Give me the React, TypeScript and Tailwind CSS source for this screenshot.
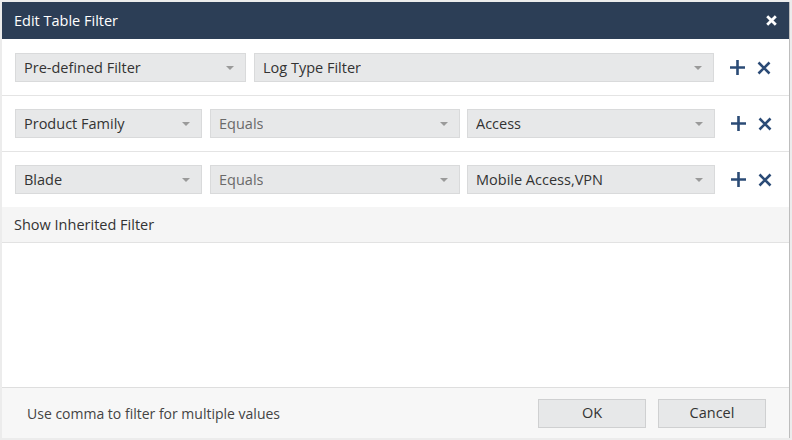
import React from "react";

const font = { fontFamily: '"Segoe UI", "Open Sans", "Noto Sans", sans-serif' };

function Caret() {
  return (
    <svg width="8" height="4" viewBox="0 0 8 4" className="shrink-0">
      <path d="M0 0 L8 0 L4 4 Z" fill="#9a9a9a" />
    </svg>
  );
}

function Select({ w, text, light }: { w: string; text: string; light?: boolean }) {
  return (
    <div
      className={`${w} h-[29px] shrink-0 flex items-center justify-between pl-[8px] pr-[11px] bg-[#e7e8e9] border border-[#d9dadb] text-[14.5px] ${light ? "text-[#6a6a6a]" : "text-[#333]"}`}
    >
      <span className="truncate">{text}</span>
      <Caret />
    </div>
  );
}

function Actions() {
  return (
    <div className="flex items-center gap-[11px] ml-[15px]">
      <svg width="17" height="17" viewBox="0 0 17 17">
        <path d="M8.5 1 V16 M1 8.5 H16" stroke="#2b4b76" strokeWidth="2.6" />
      </svg>
      <svg width="14" height="14" viewBox="0 0 14 14">
        <path d="M1.5 1.5 L12.5 12.5 M12.5 1.5 L1.5 12.5" stroke="#2b4b76" strokeWidth="2.6" />
      </svg>
    </div>
  );
}

export default function App() {
  return (
    <div className="w-[792px] h-[440px] bg-[#ececec] pl-[2px] pr-[2px] pt-[2px] pb-[2px] overflow-hidden" style={font}>
      <div className="w-[788px] h-[436px] bg-white border-r border-[#bdbdbd] flex flex-col">
        <div className="h-[37px] shrink-0 bg-[#2c3e56] flex items-center justify-between pl-[12px] pr-[12px]">
          <span className="text-white text-[14.5px]">Edit Table Filter</span>
          <svg width="11" height="11" viewBox="0 0 11 11">
            <path d="M1.2 1.2 L9.8 9.8 M9.8 1.2 L1.2 9.8" stroke="#ffffff" strokeWidth="2.8" />
          </svg>
        </div>
        <div className="flex items-center pl-[13px] pt-[14px] pb-[13px] border-b border-[#e4e4e4]">
          <Select w="w-[231px]" text="Pre-defined Filter" />
          <div className="w-[8px]" />
          <Select w="w-[460px]" text="Log Type Filter" />
          <Actions />
        </div>
        <div className="flex items-center pl-[13px] pt-[13px] pb-[13px] border-b border-[#e4e4e4]">
          <Select w="w-[187px]" text="Product Family" />
          <div className="w-[8px]" />
          <Select w="w-[250px]" text="Equals" light />
          <div className="w-[7px]" />
          <Select w="w-[248px]" text="Access" />
          <Actions />
        </div>
        <div className="flex items-center pl-[13px] pt-[13px] pb-[13px]">
          <Select w="w-[187px]" text="Blade" />
          <div className="w-[8px]" />
          <Select w="w-[250px]" text="Equals" light />
          <div className="w-[7px]" />
          <Select w="w-[248px]" text="Mobile Access,VPN" />
          <Actions />
        </div>
        <div className="h-[36px] shrink-0 bg-[#f5f5f5] border-b border-[#e2e2e2] flex items-center pl-[12px] text-[14.5px] text-[#333]">
          Show Inherited Filter
        </div>
        <div className="flex-1" />
        <div className="h-[51px] shrink-0 bg-[#f7f7f7] border-t border-[#dedede] flex items-center pl-[25px] pr-[23px]">
          <span className="text-[14px] text-[#444] mt-[1px]">Use comma to filter for multiple values</span>
          <div className="flex-1" />
          <button className="w-[108px] h-[29px] bg-[#e7e8e9] border border-[#cfd0d1] text-[14.5px] text-[#333]">OK</button>
          <div className="w-[12px]" />
          <button className="w-[108px] h-[29px] bg-[#e7e8e9] border border-[#cfd0d1] text-[14.5px] text-[#333]">Cancel</button>
        </div>
      </div>
    </div>
  );
}
